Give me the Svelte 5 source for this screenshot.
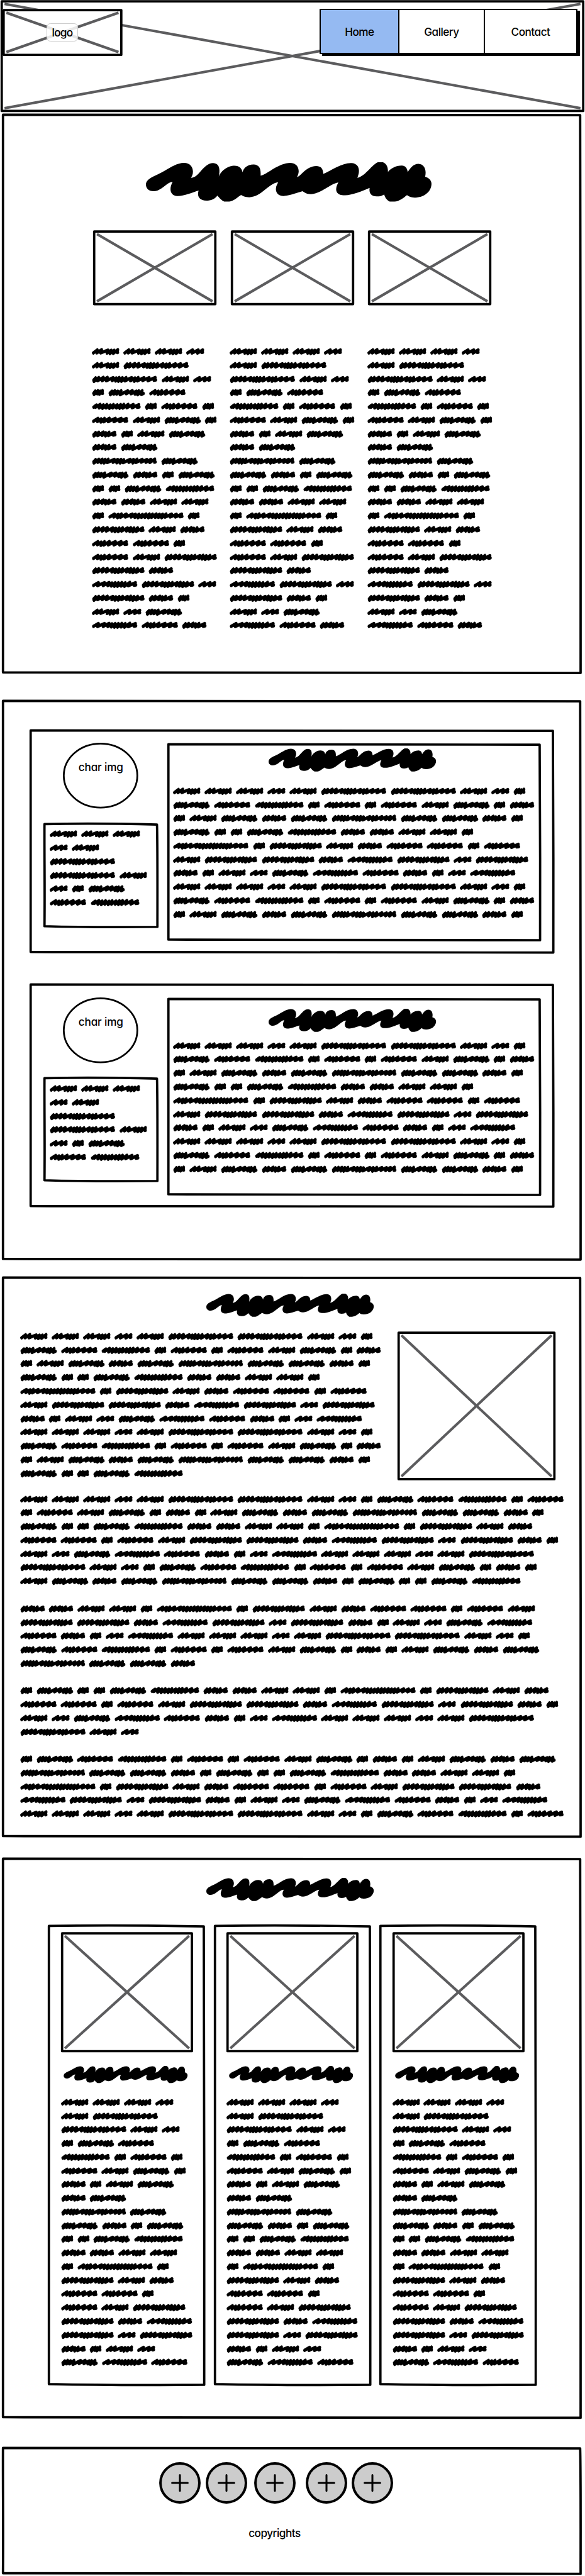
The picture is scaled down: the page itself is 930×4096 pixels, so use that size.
<script>
  // Scribbled words: [width, zigzag points]; three units make one layout pixel.
  const words = {
    A: [191, '10,8 38,-10 34,8 68,-11 60,8 112,-9 105,9 134,-8 125,12 155,-8 148,11 180,-11 176,6 180,5'],
    B: [126, '10,8 45,-10 40,9 84,-10 78,9 115,-10 106,5 115,4'],
    C: [455, '12,5 26,-8 14,13 48,-10 40,9 80,-11 70,9 108,-11 100,9 148,-10 140,8 170,-8 164,11 190,-10 184,12 212,-9 204,12 238,-10 230,10 276,-10 268,9 300,-8 294,12 322,-10 316,10 362,-10 352,8 398,-10 388,9 440,-11 430,6 444,4'],
    D: [86, '12,5 24,-8 15,12 42,-10 38,8 58,-8 52,11 74,-11 71,5 75,5'],
    E: [256, '12,4 26,-8 14,13 46,-10 38,10 66,-8 58,10 90,-10 82,13 136,-10 124,8 168,-11 158,8 196,-8 186,10 212,-9 204,13 236,-10 230,12 245,6'],
    F: [254, '11,7 42,-10 38,8 64,-8 62,12 88,-10 82,10 122,-11 112,9 164,-11 152,9 204,-11 192,9 240,-10 228,6 243,5'],
    G: [340, '12,5 32,-8 24,6 58,-11 50,10 80,-9 74,12 104,-10 98,10 128,-8 122,12 150,-10 144,10 176,-9 170,10 200,-10 192,12 222,-11 214,11 252,-11 242,9 288,-11 278,9 326,-10 314,6 329,4'],
    H: [173, '12,5 26,-8 14,12 48,-10 40,10 80,-11 70,9 96,-8 94,12 120,-10 114,10 159,-10 148,7 162,4'],
    I: [452, '12,5 26,-8 14,12 48,-10 40,8 72,-10 64,11 92,-9 84,12 114,-10 106,9 156,-10 146,8 180,-9 172,11 202,-9 196,12 222,-8 216,10 266,-10 256,8 290,-9 284,12 314,-10 306,9 350,-10 342,7 382,-9 374,8 410,-10 402,9 437,-11 434,7 441,5'],
    J: [524, '11,7 44,-10 38,8 70,-8 64,12 92,-10 84,10 126,-10 118,8 168,-10 158,8 190,-9 184,10 214,-9 206,12 238,-8 230,10 262,-10 254,10 286,-10 278,12 308,-9 300,10 334,-10 326,10 356,-9 348,10 378,-9 370,12 402,-10 394,9 440,-10 430,8 474,-9 466,8 510,-10 498,6 513,4'],
    K: [367, '12,5 26,-8 14,13 48,-10 40,9 80,-11 70,9 108,-11 100,9 146,-10 138,9 166,-8 160,12 190,-9 182,12 214,-10 206,9 248,-10 240,9 270,-11 262,11 292,-9 284,13 318,-10 308,11 353,-10 342,6 356,4'],
    L: [317, '11,7 46,-10 38,8 88,-10 78,8 120,-11 110,8 140,-8 134,11 162,-9 156,12 184,-9 178,12 208,-10 202,11 232,-9 226,12 264,-11 252,9 303,-10 292,6 306,4']
  };

  const introText = 'AAAB AC CAB DEF GDFD FAED HDAE HE IE EHDE DDEG HHAA DJD KAH FFD FAK KH LKB KHD ABE LFH';
  const cardText = 'AAAB AC CAB DEF GDFD FAED HDAE HE IE EHDE DDEG HHAA DJD KAH FFD FAK KHL KBK HDAB ELF';
  const sideText = 'AAA BA C CA BDE FG';
  const bioText =
    'AAABACCABD EFGDFDFAEDH DAEHEIEEHD EDDEGHHAAD JDKAHFFDF AKKHLKBK HDABELFHDBL AAABACCABD EFGDFDFAEDH DAEHEIEEHD';
  // One row of the block differs from the plain word cycle: it stops at the panel's edge.
  const storyText = `${bioText} EDDEG`;
  const longText = [
    'AAABACCABDEFGDF DFAEDHDAEHEIEEHD EDDEGHHAADJDKAH FFDFAKKHLKBKHD ABELFHDBLAAABAC CABDEFGDFDFAEDHD AEHEIEEHDEDDEG',
    'HHAADJDKAHFFDFA KKHLKBKHDABEL FHDBLAAABACCABD EFGDFDFAEDHDAEHE IEEH',
    'DEDDEGHHAADJDKAH FFDFAKKHLKBKHD ABELFHDBLAAABAC CAB',
    'DEFGDFDFAEDHDAEHE IEEHDEDDEGHHAAD JDKAHFFDFAKKH LKBKHDABELFHDBL AAABACCABDEFGDF'
  ];

  const titlePath =
    'M22,185C22,140 90,125 150,90C200,60 240,35 285,34C330,34 348,65 348,95C348,115 340,128 334,138C390,138 420,35 488,35C540,38 534,90 527,132C535,100 580,54 636,54C670,54 688,75 692,100C698,70 725,45 768,45C810,47 820,75 817,123C870,110 940,34 1025,34C1065,36 1082,65 1081,95C1080,110 1075,120 1070,132C1095,130 1130,57 1204,56C1240,57 1250,80 1252,111C1310,85 1380,34 1445,35C1485,36 1499,62 1499,90C1499,110 1492,125 1488,138C1540,130 1590,45 1630,30L1665,30C1695,42 1701,70 1700,98C1715,75 1755,53 1795,53C1825,55 1835,75 1837,99C1855,70 1875,42 1912,41C1955,44 1968,85 1958,130C1990,140 2002,160 2002,180C2000,235 1950,275 1883,275C1860,275 1845,268 1832,258C1805,280 1780,300 1745,303L1712,303C1690,290 1680,275 1674,253C1660,262 1645,267 1622,267C1580,267 1568,240 1573,208C1520,230 1450,260 1400,259C1345,259 1341,230 1341,215C1342,195 1352,180 1356,170C1300,180 1230,252 1165,251C1135,251 1120,240 1108,231C1060,245 1010,264 975,264C930,262 923,230 923,215C924,195 933,180 939,170C880,170 820,273 738,273C710,272 695,265 682,257C660,270 630,300 600,303L565,303C545,295 530,275 517,261C500,285 475,296 440,296C390,294 376,265 387,226C340,240 290,264 240,264C190,262 180,215 207,166C170,165 130,230 75,231C40,231 22,210 22,185Z';

  const outline = (w, h) =>
    `M2.5 3.5C${w * 0.25} 2 ${w * 0.6} 2 ${w - 3.5} 4.5C${w - 2} ${h * 0.2} ${w - 2.5} ${h * 0.7} ${w - 2.5} ${h - 2}C${w * 0.7} ${h - 1} ${w * 0.35} ${h - 1} 2.5 ${h - 3.5}C3.5 ${h * 0.6} 2 ${h * 0.3} 2.5 3.5Z`;
</script>

{#snippet frame(w, h)}
  <svg class="frame" viewBox="0 0 {w} {h}" preserveAspectRatio="none" aria-hidden="true">
    <path d={outline(w, h)} />
  </svg>
{/snippet}

{#snippet cross(w, h)}
  <svg class="cross" viewBox="0 0 {w} {h}" preserveAspectRatio="none" aria-hidden="true">
    <path class="diagonals" d="M9 9L{w - 9} {h - 9}M{w - 9} 9L9 {h - 9}" />
    <path class="edge" d="M2.5 3H{w - 2.5}V{h - 2.5}H2.5Z" />
  </svg>
{/snippet}

{#snippet scribble(lines)}
  <div class="scribble">
    {#each lines.split(' ') as line}
      <div class="line">
        {#each line.split('') as key}
          <svg style="width:{words[key][0] / 300}rem" viewBox="0 -22 {words[key][0]} 44" aria-hidden="true">
            <polyline transform="scale(1 1.17)" points={words[key][1]} />
          </svg>
        {/each}
      </div>
    {/each}
  </div>
{/snippet}

{#snippet title()}
  <svg class="title" viewBox="22 30 1980 273" aria-hidden="true"><path d={titlePath} /></svg>
{/snippet}

<div class="page">
  <header>
    {@render cross(1349, 259)}
    <div class="logo">
      {@render cross(277, 109)}
      <span>logo</span>
    </div>
    <nav>
      <a class="active" href="#home">Home</a>
      <a href="#gallery">Gallery</a>
      <a href="#contact">Contact</a>
    </nav>
  </header>

  <main>
    <section class="intro">
      {@render frame(1340, 1296)}
      {@render title()}
      <div class="thumbs">
        {#each [1, 2, 3] as _}
          <div class="thumb">{@render cross(285, 173)}</div>
        {/each}
      </div>
      <div class="columns">
        {#each [1, 2, 3] as _}{@render scribble(introText)}{/each}
      </div>
    </section>

    <section class="characters">
      {@render frame(1340, 1297)}
      {#each [1, 2] as _}
        <article>
          {@render frame(1213, 519)}
          <div class="profile">
            <div class="portrait">
              <svg viewBox="0 0 174 152" aria-hidden="true"><ellipse cx="87" cy="76" rx="85" ry="74" /></svg>
              <span>char img</span>
            </div>
            <div class="facts">
              {@render frame(266, 243)}
              {@render scribble(sideText)}
            </div>
          </div>
          <div class="bio">
            {@render frame(864, 458)}
            {@render title()}
            {@render scribble(bioText)}
          </div>
        </article>
      {/each}
    </section>

    <section class="story">
      {@render frame(1340, 1297)}
      {@render title()}
      <div class="lead">
        {@render scribble(storyText)}
        <div class="picture">{@render cross(365, 344)}</div>
      </div>
      <div class="paragraphs">
        {#each longText as text}{@render scribble(text)}{/each}
      </div>
    </section>

    <section class="gallery">
      {@render frame(1340, 1297)}
      {@render title()}
      <div class="cards">
        {#each [1, 2, 3] as _}
          <div class="card">
            {@render frame(364, 1066)}
            <div class="picture">{@render cross(305, 278)}</div>
            {@render title()}
            {@render scribble(cardText)}
          </div>
        {/each}
      </div>
    </section>
  </main>

  <footer>
    {@render frame(1340, 297)}
    <div class="social">
      {#each [0, 12, 16, 22, 10] as gap}
        <svg style="margin-left:{gap / 100}rem" viewBox="0 0 96 96" aria-hidden="true">
          <circle cx="48" cy="48" r="45" />
          <path d="M48 30V66M30 48H66" />
        </svg>
      {/each}
    </div>
    <p>copyrights</p>
  </footer>
</div>

<style>
  /* 1rem = 100 layout pixels of a 1352px wide page */
  :global(html) {
    font-size: 68.787px;
  }
  :global(body) {
    margin: 0;
    background: #fff;
  }
  .page,
  .page :global(*) {
    box-sizing: border-box;
  }
  .page {
    width: 13.52rem;
    height: 59.52rem;
    overflow: hidden;
    color: #000;
    font-family: Inter, 'Liberation Sans', sans-serif;
    font-weight: 500;
    font-feature-settings: 'cv11';
  }
  svg {
    display: block;
    overflow: visible;
  }
  .frame,
  .cross {
    position: absolute;
    inset: 0;
    width: 100%;
    height: 100%;
    fill: none;
    stroke: #000;
    stroke-width: 5.4;
    stroke-linejoin: round;
  }
  .diagonals {
    stroke: #5c5c5e;
    stroke-width: 6;
  }
  header {
    position: relative;
    display: flex;
    justify-content: space-between;
    align-items: flex-start;
    width: 13.49rem;
    height: 2.59rem;
    margin-left: 0.02rem;
    padding: 0.205rem 0.165rem 0 0.035rem;
  }
  .logo {
    position: relative;
    display: flex;
    align-items: center;
    justify-content: center;
    width: 2.77rem;
    height: 1.09rem;
    background: #fff;
    font-size: 0.25rem;
  }
  .logo span {
    position: relative;
    display: flex;
    align-items: center;
    justify-content: center;
    width: 0.72rem;
    height: 0.42rem;
    border: 0.02rem solid #ccc;
    border-radius: 0.09rem;
    background: rgba(255, 255, 255, 0.85);
    letter-spacing: -0.04em;
  }
  nav {
    position: relative;
    display: flex;
    width: 5.96rem;
    height: 1.045rem;
    border: 0.04rem solid #000;
    border-radius: 0.01rem;
    background: #fff;
    box-shadow: 0.06rem 0.045rem 0 #000;
  }
  nav a {
    display: flex;
    align-items: center;
    justify-content: center;
    width: 1.98rem;
    color: #000;
    font-size: 0.25rem;
    letter-spacing: -0.03em;
    text-decoration: none;
    border-right: 0.03rem solid #000;
  }
  nav a:first-child {
    width: 1.815rem;
  }
  nav a:last-child {
    flex: 1;
    border-right: 0;
  }
  nav .active {
    background: #95baf2;
  }
  section,
  footer {
    position: relative;
    display: flow-root;
    width: 13.4rem;
    height: 12.97rem;
    margin-left: 0.05rem;
  }
  .title {
    width: 3.87rem;
    height: 0.535rem;
  }
  .scribble {
    display: flex;
    flex-direction: column;
  }
  .line {
    display: flex;
    align-items: center;
    gap: 0.09rem;
    height: 0.3165rem;
  }
  .line svg {
    flex: none;
    height: 0.1467rem;
    fill: none;
    stroke: #000;
    stroke-width: 19.5;
    stroke-linecap: round;
    stroke-linejoin: round;
  }

  .intro {
    height: 12.96rem;
    margin-top: 0.03rem;
  }
  .intro > .title {
    width: 6.6rem;
    height: 0.91rem;
    margin: 1.13rem 0 0 3.33rem;
  }
  .thumbs {
    display: flex;
    gap: 0.33rem;
    margin: 0.66rem 0 0 2.1rem;
  }
  .thumb {
    position: relative;
    width: 2.85rem;
    height: 1.735rem;
  }
  .columns {
    display: grid;
    grid-template-columns: repeat(3, 3.182rem);
    margin: 0.915rem 0 0 2.075rem;
  }

  .characters {
    margin-top: 0.59rem;
    padding: 0.675rem 0 0 0.64rem;
  }
  article {
    position: relative;
    display: flex;
    width: 12.13rem;
    height: 5.19rem;
    margin-bottom: 0.695rem;
    padding: 0.325rem 0 0 0.32rem;
  }
  .profile {
    width: 2.66rem;
    margin-right: 0.2rem;
  }
  .portrait {
    position: relative;
    width: 1.74rem;
    height: 1.52rem;
    margin-left: 0.45rem;
    padding-top: 0.395rem;
    font-size: 0.25rem;
    letter-spacing: -0.01em;
    line-height: 0.35rem;
    text-align: center;
  }
  .portrait svg {
    position: absolute;
    inset: 0;
    width: 100%;
    height: 100%;
    fill: none;
    stroke: #000;
    stroke-width: 4;
  }
  .facts {
    position: relative;
    height: 2.43rem;
    margin-top: 0.32rem;
    padding: 0.115rem 0 0 0.14rem;
  }
  .bio {
    position: relative;
    width: 8.64rem;
    height: 4.585rem;
    padding: 0.135rem 0 0 0.135rem;
  }
  .bio .title {
    margin: 0 0 0.29rem 2.205rem;
  }
  /* the second card's heading sits a little closer to its text */
  article:last-child .title {
    margin-top: 0.13rem;
    margin-bottom: 0.16rem;
  }

  .story {
    height: 12.98rem;
    margin-top: 0.355rem;
  }
  .story > .title {
    margin: 0.415rem 0 0 4.72rem;
  }
  .lead {
    display: flex;
    justify-content: space-between;
    align-items: flex-start;
    margin: 0.29rem 0.61rem 0 0.41rem;
  }
  .picture {
    position: relative;
    width: 3.65rem;
    height: 3.44rem;
    margin-top: 0.035rem;
  }
  .paragraphs {
    display: flex;
    flex-direction: column;
    gap: 0.3165rem;
    margin: 0.28rem 0 0 0.41rem;
  }

  .gallery {
    height: 12.98rem;
    margin-top: 0.46rem;
  }
  .gallery > .title {
    margin: 0.48rem 0 0 4.72rem;
  }
  .cards {
    display: flex;
    gap: 0.19rem;
    margin: 0.53rem 0 0 1.06rem;
  }
  .card {
    position: relative;
    width: 3.64rem;
    height: 10.66rem;
    padding: 0.175rem 0 0 0.295rem;
  }
  .card .picture {
    width: 3.05rem;
    height: 2.78rem;
    margin-top: 0;
  }
  .card .title {
    width: 2.87rem;
    height: 0.395rem;
    margin: 0.325rem 0 0.285rem 0.06rem;
  }

  footer {
    height: 2.965rem;
    margin-top: 0.64rem;
  }
  .social {
    display: flex;
    margin: 0.355rem 0 0 3.63rem;
  }
  .social svg {
    width: 0.96rem;
    height: 0.96rem;
    stroke: #000;
  }
  .social circle {
    fill: #ccc;
    stroke-width: 5.8;
  }
  .social path {
    stroke-width: 4.4;
    stroke-linecap: round;
  }
  p {
    width: 1.4rem;
    margin: 0.525rem 0 0 5.595rem;
    font-size: 0.25rem;
    letter-spacing: -0.03em;
    line-height: 0.32rem;
    text-align: center;
  }
</style>
